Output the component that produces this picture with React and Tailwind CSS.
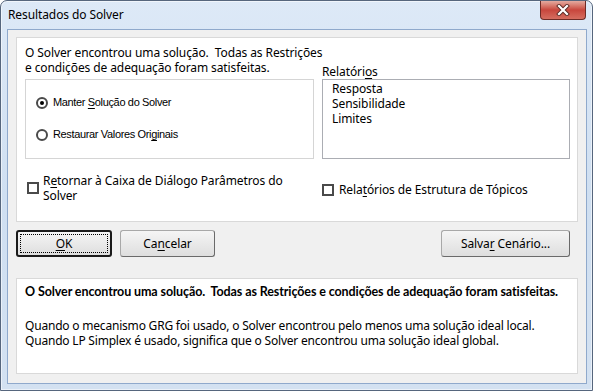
import React from "react";

const F = { fontFamily: '"Noto Sans", "Open Sans", sans-serif' };
const T = { fontFamily: '"Liberation Sans", Arial, sans-serif' };
const B = { fontFamily: 'Lato, "Noto Sans", sans-serif' };

function U({ children }) {
  return <span className="underline underline-offset-2">{children}</span>;
}

function Btn({ children, def, className = "" }) {
  return (
    <div
      className={
        "relative h-[27px] flex items-center justify-center rounded-[3px] bg-gradient-to-b from-[#f5f5f5] to-[#dedede] text-[12px] text-black " +
        (def
          ? "border-2 border-[#1a1a1a] "
          : "border border-[#a8a8a8] border-b-[#6a6a6a] border-r-[#6a6a6a] ") +
        className
      }
    >
      {def && (
        <div className="absolute inset-[2px] border border-dotted border-black" />
      )}
      <span className="relative">{children}</span>
    </div>
  );
}

export default function App() {
  return (
    <div
      style={F}
      className="relative w-[593px] h-[391px] overflow-hidden rounded-t-[7px] border border-[#56667d] bg-gradient-to-b from-[#dde9f7] via-[#cfdff1] to-[#d3e1f1] shadow-[inset_0_0_0_1px_rgba(255,255,255,0.55)] flex flex-col text-black tracking-[-0.1px]"
    >
      {/* title bar */}
      <div className="h-[28px] flex items-center pl-[7px] text-[12px] shrink-0">
        Resultados do Solver
      </div>
      {/* close button */}
      <div className="absolute left-[539px] top-0 w-[46px] h-[19px] rounded-b-[4px] border border-t-0 border-[#6d2b26] bg-gradient-to-b from-[#e3aaa0] via-[#c8463d] to-[#d56d60] flex items-center justify-center">
        <svg width="14" height="12" viewBox="0 0 14 12">
          <path d="M3 2 L11 10 M11 2 L3 10" stroke="#5a2a25" strokeWidth="4" strokeLinecap="square" />
          <path d="M3 2 L11 10 M11 2 L3 10" stroke="#ffffff" strokeWidth="2.2" strokeLinecap="square" />
        </svg>
      </div>

      {/* content */}
      <div className="ml-[6px] mr-[5px] mb-[6px] h-[355px] border border-[#8fa9cc] bg-[#f0f0f0] px-[8px] pt-[7px] pb-[9px] flex flex-col">
        {/* top panel */}
        <div className="h-[185px] border border-[#d9d9d9] bg-white pl-[8px] pr-[7px] pt-[7px] text-[12px] leading-[15px] flex flex-col">
          <div className="flex gap-[8px]">
            <div className="w-[289px] flex flex-col">
              <div className="whitespace-nowrap">
                <div>O Solver encontrou uma solução.&nbsp; Todas as Restrições</div>
                <div>e condições de adequação foram satisfeitas.</div>
              </div>
              <div
                style={T}
                className="mt-[4px] h-[80px] border border-[#d5d5d5] pl-[10px] pt-[15px] text-[11px] leading-[15px] tracking-[-0.35px] flex flex-col gap-[17px]"
              >
                <div className="flex items-center gap-[5px]">
                  <span className="w-[12px] h-[12px] rounded-full border-2 border-[#4a4a4a] flex items-center justify-center">
                    <span className="w-[4px] h-[4px] rounded-full bg-black" />
                  </span>
                  <span>
                    Manter <U>S</U>olução do Solver
                  </span>
                </div>
                <div className="flex items-center gap-[5px]">
                  <span className="w-[12px] h-[12px] rounded-full border-2 border-[#4a4a4a]" />
                  <span>
                    Restaurar Valores Ori<U>g</U>inais
                  </span>
                </div>
              </div>
            </div>
            <div className="w-[248px] flex flex-col">
              <div className="mt-[19px]">
                Relatóri<U>o</U>s
              </div>
              <div className="h-[80px] border border-[#abadb3] pl-[9px] pt-[1px]">
                <div>Resposta</div>
                <div>Sensibilidade</div>
                <div>Limites</div>
              </div>
            </div>
          </div>
          <div className="mt-[14px] flex gap-[8px]">
            <div className="w-[289px] flex items-center pl-[2px] gap-[4px]">
              <span className="w-[12px] h-[12px] border-2 border-[#4a4a4a] shrink-0" />
              <div className="flex flex-col">
                <div>
                  R<U>e</U>tornar à Caixa de Diálogo Parâmetros do
                </div>
                <div>Solver</div>
              </div>
            </div>
            <div className="w-[248px] flex items-center gap-[5px] pt-[3px]">
              <span className="w-[12px] h-[12px] border-2 border-[#4a4a4a] shrink-0" />
              <span>
                Rela<U>t</U>órios de Estrutura de Tópicos
              </span>
            </div>
          </div>
        </div>

        {/* buttons */}
        <div className="mt-[8px] flex">
          <Btn def className="w-[96px]">
            <U>O</U>K
          </Btn>
          <Btn className="w-[95px] ml-[8px]">
            Ca<U>n</U>celar
          </Btn>
          <Btn className="w-[129px] ml-auto mr-[8px]">
            Salva<U>r</U> Cenário...
          </Btn>
        </div>

        {/* bottom panel */}
        <div className="mt-[21px] h-[96px] border border-[#d9d9d9] bg-white pl-[8px] pt-[5px] text-[12px] leading-[15px]">
          <div style={B} className="font-bold whitespace-nowrap text-[12.5px] tracking-[-0.1px]">
            O Solver encontrou uma solução.&nbsp; Todas as Restrições e condições de adequação foram satisfeitas.
          </div>
          <div className="mt-[19px] tracking-[-0.2px] whitespace-nowrap">
            <div>Quando o mecanismo GRG foi usado, o Solver encontrou pelo menos uma solução ideal local.</div>
            <div>Quando LP Simplex é usado, significa que o Solver encontrou uma solução ideal global.</div>
          </div>
        </div>
      </div>
    </div>
  );
}
